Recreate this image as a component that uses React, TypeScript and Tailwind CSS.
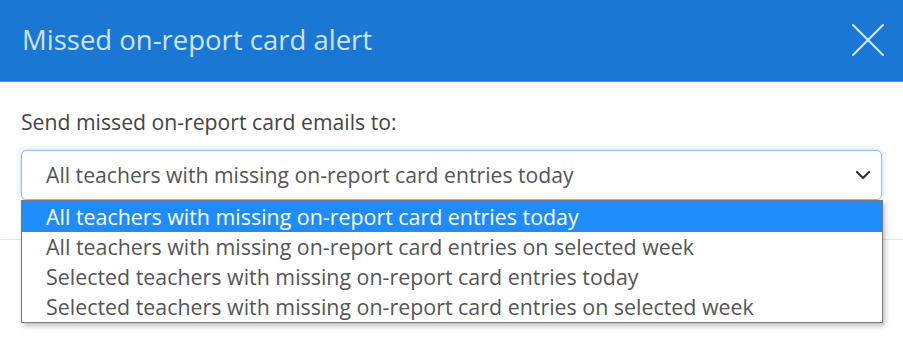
import { ChevronDown } from "lucide-react";

const options = [
  "All teachers with missing on-report card entries today",
  "All teachers with missing on-report card entries on selected week",
  "Selected teachers with missing on-report card entries today",
  "Selected teachers with missing on-report card entries on selected week",
];

export default function App() {
  return (
    <div className="w-[903px] h-[337px] overflow-hidden bg-white font-['Open_Sans',sans-serif]">
      {/* Header */}
      <div className="flex h-[82px] items-center justify-between border-b border-[#4a97e3] bg-[#1a77d4] pl-[22px] pr-[19px]">
        <h2 className="text-[27.5px] leading-none text-[#cfe4fa] pb-[2px]">Missed on-report card alert</h2>
        <svg width="32" height="32" viewBox="0 0 32 32" className="mb-[1px]">
          <path d="M1 1 L31 31 M31 1 L1 31" stroke="#d6e8fb" strokeWidth="2" strokeLinecap="round" />
        </svg>
      </div>

      {/* Body */}
      <div className="relative h-[158px] border-b border-[#e5e5e5] px-[21px] pt-[26px]">
        <p className="text-[21.2px] leading-[28px] text-[#444]">Send missed on-report card emails to:</p>
        <div className="mt-[14px] flex h-[50px] items-center justify-between rounded-[5px] border border-[#8cc0f2] bg-white pl-[24px] pr-[6px] shadow-[0_0_6px_rgba(102,175,233,0.45)]">
          <span className="text-[21.2px] text-[#555]">{options[0]}</span>
          <ChevronDown size={24} strokeWidth={2.2} className="text-[#333]" />
        </div>

        {/* Open dropdown list */}
        <div className="absolute left-[21px] top-[118px] w-[862px] border border-[#7a7a7a] bg-white shadow-[2px_3px_5px_rgba(0,0,0,0.25)]">
          {options.map((opt, i) => (
            <div
              key={opt}
              className={
                i === 0
                  ? "h-[31px] bg-[#1e8cfa] pl-[24px] text-[21.4px] leading-[31px] text-white"
                  : "h-[30px] pl-[24px] text-[21.4px] leading-[30px] text-[#555]"
              }
            >
              {opt}
            </div>
          ))}
        </div>
      </div>
    </div>
  );
}
